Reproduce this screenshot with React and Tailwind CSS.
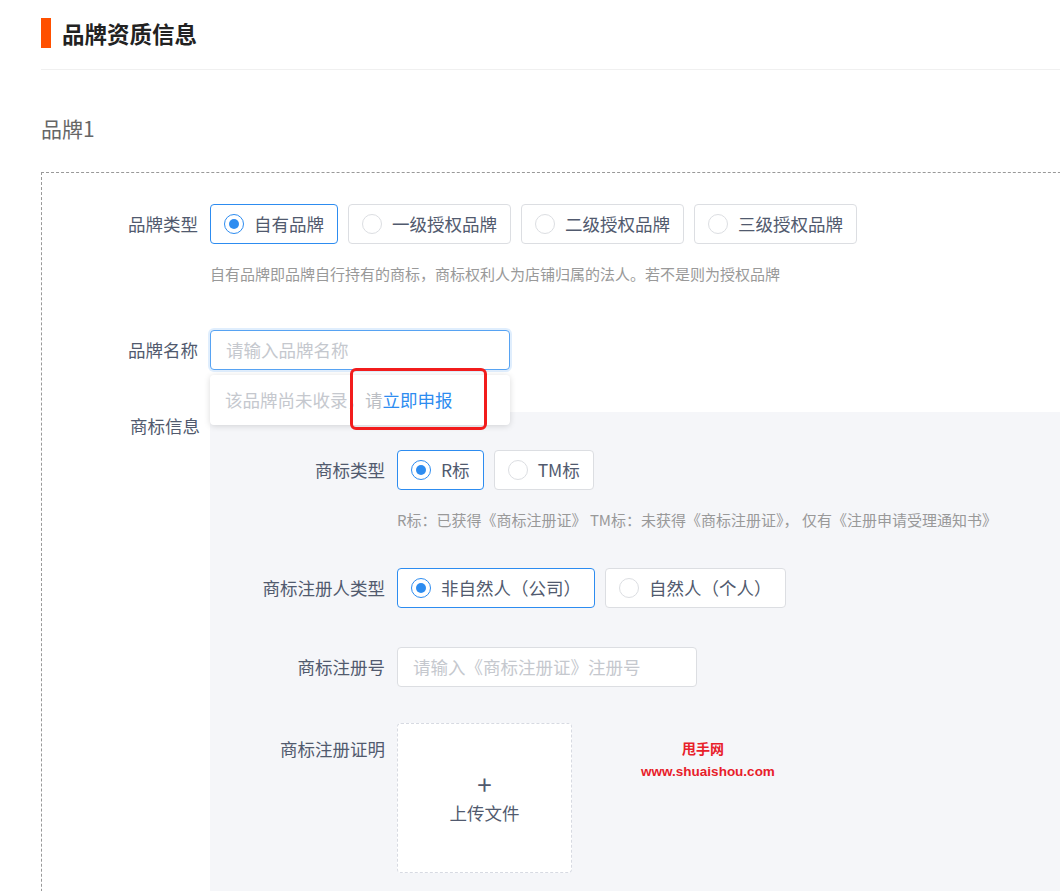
import React from "react";

const FONT = { fontFamily: '"Noto Sans CJK SC", "Noto Sans", sans-serif' };

function Radio({ label, checked }) {
  return (
    <div
      className={
        "h-[40px] rounded-[4px] border bg-white pl-[13px] pr-[13px] flex items-center gap-[10px] " +
        (checked ? "border-[#2d8cf0]" : "border-[#dcdee2]")
      }
    >
      <span
        className={
          "w-[20px] h-[20px] rounded-full flex items-center justify-center bg-white " +
          (checked ? "border-[1.5px] border-[#2d8cf0]" : "border border-[#dcdee2]")
        }
      >
        {checked && <span className="w-[10px] h-[10px] rounded-full bg-[#2d8cf0]" />}
      </span>
      <span className="text-[17.5px] leading-[24px] text-[#515a6e]">{label}</span>
    </div>
  );
}

export default function App() {
  return (
    <div className="relative w-[1060px] h-[891px] overflow-hidden bg-white" style={FONT}>
      <div className="pl-[41px]">
        {/* header */}
        <div className="flex items-start gap-[11px] pt-[18px] pb-[21px] border-b border-[#f0f0f0]">
          <div className="w-[10px] h-[30px] bg-[#ff5000]" />
          <div className="text-[22.5px] leading-[30px] font-bold text-[#222]">品牌资质信息</div>
        </div>
        <div className="mt-[46px] text-[21px] leading-[24px] text-[#666]">品牌1</div>

        {/* dashed box */}
        <div className="mt-[32px] w-[1060px] h-[800px] border border-dashed border-[#999] pt-[31px]">
          {/* brand type */}
          <div className="flex gap-[12px]">
            <div className="w-[156px] text-right text-[17.5px] leading-[40px] text-[#515a6e]">品牌类型</div>
            <div className="flex gap-[10px]">
              <Radio label="自有品牌" checked />
              <Radio label="一级授权品牌" />
              <Radio label="二级授权品牌" />
              <Radio label="三级授权品牌" />
            </div>
          </div>
          <div className="mt-[20px] pl-[168px] text-[15px] leading-[20px] text-[#999]">
            自有品牌即品牌自行持有的商标，商标权利人为店铺归属的法人。若不是则为授权品牌
          </div>

          {/* brand name */}
          <div className="mt-[46px] flex gap-[12px] relative z-10">
            <div className="w-[156px] text-right text-[17.5px] leading-[40px] text-[#515a6e]">品牌名称</div>
            <div className="relative">
              <div className="w-[300px] h-[40px] rounded-[4px] border border-[#57a3f3] shadow-[0_0_0_2px_rgba(45,140,240,0.15)] px-[15px] flex items-center text-[17.5px] text-[#c5c8ce] bg-white">
                请输入品牌名称
              </div>
              <div className="absolute left-0 top-[45px] w-[300px] h-[50px] bg-white rounded-[4px] shadow-[0_1px_6px_rgba(0,0,0,0.15)] pl-[15px] flex items-center text-[17.5px] leading-[24px]">
                <span className="text-[#c5c8ce]">该品牌尚未收录，</span>
                <span className="text-[#bbbec4]">请</span>
                <span className="text-[#2d8cf0]">立即申报</span>
              </div>
              <div className="absolute left-[140px] top-[38px] w-[137px] h-[62px] border-[3px] border-[#f21c1c] rounded-[6px]" />
            </div>
          </div>

          {/* trademark info */}
          <div className="mt-[42px] flex gap-[12px]">
            <div className="w-[158px] text-right text-[17.5px] leading-[28px] text-[#515a6e]">商标信息</div>
            <div className="flex-1 h-[600px] bg-[#f5f6f9] pt-[38px] -ml-[2px]">
              <div className="flex gap-[12px]">
                <div className="w-[175px] text-right text-[17.5px] leading-[40px] text-[#515a6e]">商标类型</div>
                <div className="flex gap-[10px]">
                  <Radio label="R标" checked />
                  <Radio label="TM标" />
                </div>
              </div>
              <div className="mt-[20px] pl-[187px] text-[15px] leading-[20px] text-[#999]">
                R标：已获得《商标注册证》 TM标：未获得《商标注册证》， 仅有《注册申请受理通知书》
              </div>

              <div className="mt-[38px] flex gap-[12px]">
                <div className="w-[175px] text-right text-[17.5px] leading-[40px] text-[#515a6e]">商标注册人类型</div>
                <div className="flex gap-[10px]">
                  <Radio label="非自然人（公司）" checked />
                  <Radio label="自然人（个人）" />
                </div>
              </div>

              <div className="mt-[39px] flex gap-[12px]">
                <div className="w-[175px] text-right text-[17.5px] leading-[40px] text-[#515a6e]">商标注册号</div>
                <div className="w-[300px] h-[40px] rounded-[4px] border border-[#dcdee2] bg-white px-[15px] flex items-center text-[17.5px] text-[#c5c8ce]">
                  请输入《商标注册证》注册号
                </div>
              </div>

              <div className="mt-[36px] flex gap-[12px]">
                <div className="w-[175px] text-right text-[17.5px] leading-[52px] text-[#515a6e]">商标注册证明</div>
                <div className="w-[175px] h-[150px] rounded-[4px] border border-dashed border-[#d7dae2] bg-white flex flex-col items-center justify-center">
                  <span className="text-[26px] leading-[26px] text-[#515a6e]">+</span>
                  <span className="mt-[4px] text-[17.5px] leading-[24px] text-[#515a6e]">上传文件</span>
                </div>
              </div>
            </div>
          </div>
        </div>
      </div>

      {/* watermark */}
      <div className="absolute left-[639px] top-[736px] w-[138px] flex flex-col items-center text-[#e8202a] font-bold" style={{ fontFamily: '"Liberation Sans", "Noto Sans CJK SC", sans-serif' }}>
        <span className="text-[14px] leading-[24px] mr-[10px]" style={FONT}>甩手网</span>
        <span className="text-[13.5px] leading-[16px] mt-[4px]">www.shuaishou.com</span>
      </div>
    </div>
  );
}
